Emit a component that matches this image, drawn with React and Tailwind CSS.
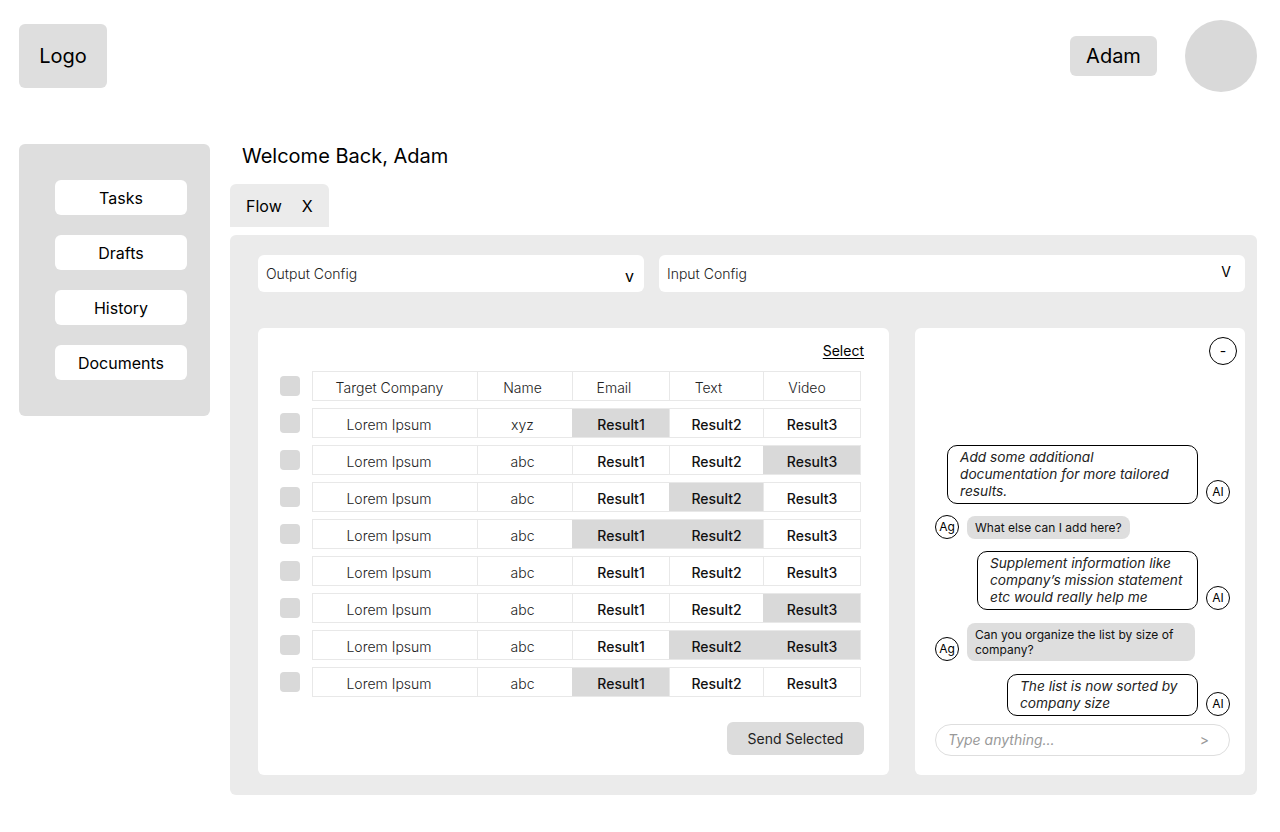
const rows = [
  { company: "Lorem Ipsum", name: "xyz", hl: [true, false, false] },
  { company: "Lorem Ipsum", name: "abc", hl: [false, false, true] },
  { company: "Lorem Ipsum", name: "abc", hl: [false, true, false] },
  { company: "Lorem Ipsum", name: "abc", hl: [true, true, false] },
  { company: "Lorem Ipsum", name: "abc", hl: [false, false, false] },
  { company: "Lorem Ipsum", name: "abc", hl: [false, false, true] },
  { company: "Lorem Ipsum", name: "abc", hl: [false, true, true] },
  { company: "Lorem Ipsum", name: "abc", hl: [true, false, false] },
];

const widths = ["w-[164px]", "w-[95px]", "w-[97px]", "w-[94px]", "w-[97px]"];
const headerPad = ["pr-[11px]", "pr-[5px]", "pr-[14px]", "pr-[16px]", "pr-[10px]"];

function Cell({ width, first, highlight, strong, pad, children }) {
  return (
    <div
      className={
        width +
        " flex h-full items-center justify-center pt-[3px] text-sm " +
        (pad ? pad + " " : "") +
        (first ? "" : "border-l ") +
        (highlight ? "bg-[#d9d9d9] border-[#d9d9d9] " : "border-[#e8e8e8] ") +
        (strong ? "font-medium text-[#111]" : "font-light text-[#222]")
      }
    >
      {children}
    </div>
  );
}

function Badge({ label }) {
  return (
    <div className="flex h-6 w-6 shrink-0 items-center justify-center rounded-full border border-black text-xs text-black">
      {label}
    </div>
  );
}

function AiMessage({ width, children }) {
  return (
    <div className="flex items-end justify-end gap-2">
      <div
        className={
          width +
          " rounded-[10px] border border-black px-3 py-[3px] text-[13.7px] italic leading-[17px] text-[#222]"
        }
      >
        {children}
      </div>
      <Badge label="AI" />
    </div>
  );
}

function UserMessage({ width, children }) {
  return (
    <div className="flex items-end gap-2">
      <Badge label="Ag" />
      <div
        className={
          (width || "") +
          " rounded-lg bg-[#dedede] px-2 py-1 text-xs leading-[15px] text-[#111]"
        }
      >
        {children}
      </div>
    </div>
  );
}

function App() {
  return (
    <div className="min-h-screen bg-white font-['Inter',sans-serif] text-black">
      <header className="flex h-[112px] items-center justify-between pl-[19px] pr-[23px]">
        <div className="flex h-16 w-[88px] items-center justify-center rounded-md bg-[#dedede] text-xl">
          Logo
        </div>
        <div className="flex items-center gap-7">
          <div className="flex h-10 w-[87px] items-center justify-center rounded-md bg-[#dedede] text-xl">
            Adam
          </div>
          <div className="h-[72px] w-[72px] rounded-full bg-[#d9d9d9]" />
        </div>
      </header>

      <div className="mt-8 flex gap-5 pl-[19px] pr-[23px]">
        <aside className="flex h-[272px] w-[191px] shrink-0 flex-col gap-5 rounded-md bg-[#dedede] pl-9 pt-9">
          {["Tasks", "Drafts", "History", "Documents"].map((item) => (
            <div
              key={item}
              className="flex h-[35px] w-[132px] items-center justify-center rounded-md bg-white text-base"
            >
              {item}
            </div>
          ))}
        </aside>

        <main className="flex-1">
          <h1 className="pl-3 text-xl leading-6">Welcome Back, Adam</h1>
          <div className="mt-4 flex h-[43px] w-[99px] items-center gap-5 rounded-t-md bg-[#ebebeb] pl-4 text-base">
            <span>Flow</span>
            <span>X</span>
          </div>

          <section className="mt-2 rounded-md bg-[#ebebeb] pb-5 pl-7 pr-3 pt-5">
            <div className="flex gap-[15px]">
              <div className="flex h-[37px] w-[386px] items-center justify-between rounded-md bg-white pl-2 pr-[10px] text-sm font-light text-[#222]">
                <span>Output Config</span>
                <span className="pt-1 text-base font-normal text-black">v</span>
              </div>
              <div className="flex h-[37px] flex-1 items-center justify-between rounded-md bg-white pl-2 pr-[14px] text-sm font-light text-[#222]">
                <span>Input Config</span>
                <span className="-mt-1 font-normal text-black">V</span>
              </div>
            </div>

            <div className="mt-9 flex gap-[26px]">
              <div className="flex h-[447px] w-[631px] flex-col rounded-md bg-white pb-5 pl-[22px] pr-[25px] pt-[13px]">
                <div className="flex justify-end">
                  <span className="text-sm leading-5 underline underline-offset-2">Select</span>
                </div>
                <div className="mt-[10px] flex flex-col gap-[7px]">
                  <div className="flex items-center gap-3">
                    <div className="h-5 w-5 rounded-sm bg-[#d9d9d9]" />
                    <div className="flex h-[30px] border border-[#e8e8e8]">
                      {["Target Company", "Name", "Email", "Text", "Video"].map((h, i) => (
                        <Cell key={h} width={widths[i]} first={i === 0} pad={headerPad[i]}>
                          {h}
                        </Cell>
                      ))}
                    </div>
                  </div>
                  {rows.map((r, idx) => (
                    <div key={idx} className="flex items-center gap-3">
                      <div className="h-5 w-5 rounded-sm bg-[#d9d9d9]" />
                      <div className="flex h-[30px] border border-[#e8e8e8]">
                        <Cell width={widths[0]} first pad="pr-[12px]">
                          {r.company}
                        </Cell>
                        <Cell width={widths[1]} pad="pr-[5px]">
                          {r.name}
                        </Cell>
                        {["Result1", "Result2", "Result3"].map((res, j) => (
                          <Cell key={res} width={widths[j + 2]} highlight={r.hl[j]} strong>
                            {res}
                          </Cell>
                        ))}
                      </div>
                    </div>
                  ))}
                </div>
                <div className="mt-auto flex justify-end">
                  <button className="h-[33px] w-[137px] rounded-md bg-[#dcdcdc] text-sm text-[#222]">
                    Send Selected
                  </button>
                </div>
              </div>

              <div className="flex h-[447px] flex-1 flex-col rounded-md bg-white pb-[19px] pl-5 pr-[15px] pt-[9px]">
                <div className="-mr-[7px] flex justify-end">
                  <div className="flex h-7 w-7 items-center justify-center rounded-full border border-black text-sm">
                    -
                  </div>
                </div>
                <div className="mt-auto flex flex-col">
                  <AiMessage width="w-[251px]">
                    Add some additional documentation for more tailored results.
                  </AiMessage>
                  <div className="mt-[11px]">
                    <UserMessage>What else can I add here?</UserMessage>
                  </div>
                  <div className="mt-3">
                    <AiMessage width="w-[221px]">
                      Supplement information like company’s mission statement etc would really help me
                    </AiMessage>
                  </div>
                  <div className="mt-[13px]">
                    <UserMessage width="w-[228px]">
                      Can you organize the list by size of company?
                    </UserMessage>
                  </div>
                  <div className="mt-[13px]">
                    <AiMessage width="w-[191px]">The list is now sorted by company size</AiMessage>
                  </div>
                </div>
                <div className="mt-2 flex h-8 items-center justify-between rounded-2xl border border-[#dedede] pl-3 pr-5 text-sm italic text-[#999]">
                  <span>Type anything...</span>
                  <span className="not-italic text-[#999]">&gt;</span>
                </div>
              </div>
            </div>
          </section>
        </main>
      </div>
    </div>
  );
}

export default App;
